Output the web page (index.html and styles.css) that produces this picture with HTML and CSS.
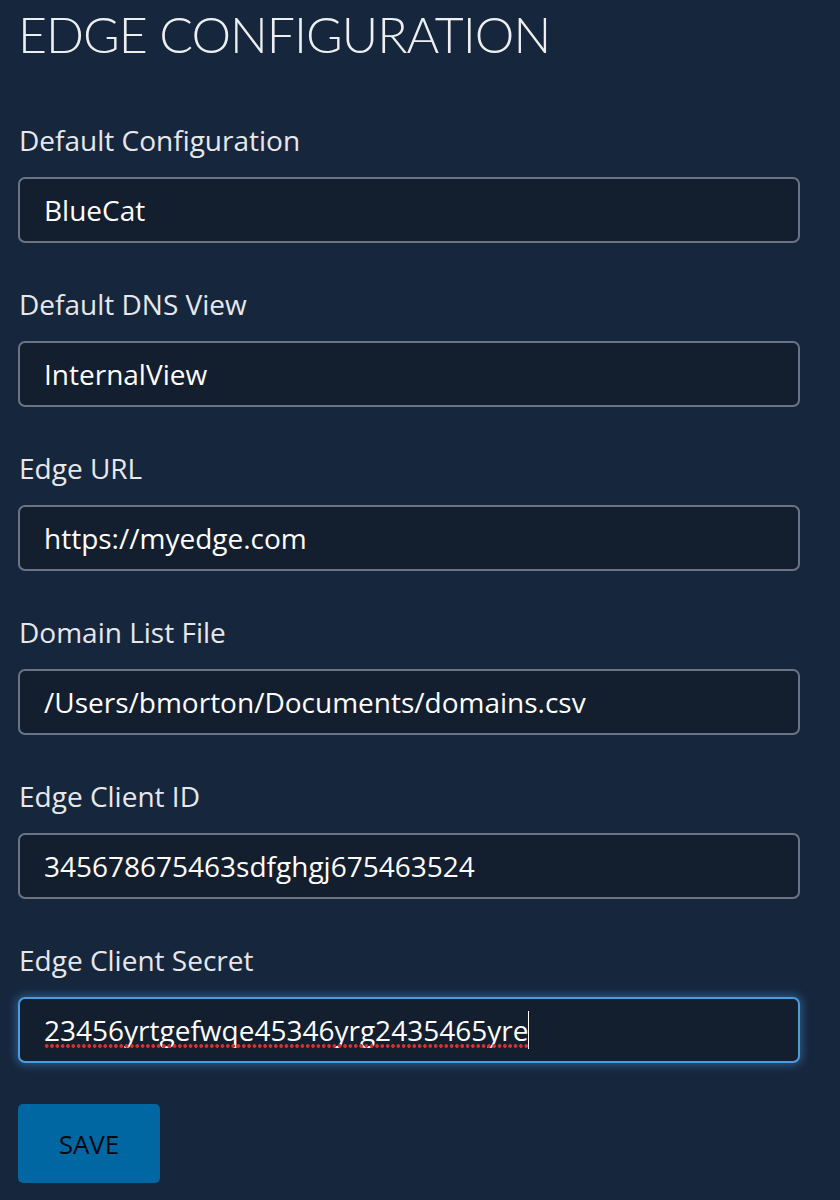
FILE: index.html
```html
<!DOCTYPE html>
<html>
<head>
<meta charset="utf-8">
<link rel="stylesheet" href="styles.css">
</head>
<body>
<main class="page">
  <h1 class="title">EDGE CONFIGURATION</h1>
  <form class="form">
    <div class="field">
      <label class="label">Default Configuration</label>
      <div class="input">BlueCat</div>
    </div>
    <div class="field">
      <label class="label">Default DNS View</label>
      <div class="input">InternalView</div>
    </div>
    <div class="field">
      <label class="label">Edge URL</label>
      <div class="input">https://myedge.com</div>
    </div>
    <div class="field">
      <label class="label">Domain List File</label>
      <div class="input">/Users/bmorton/Documents/domains.csv</div>
    </div>
    <div class="field">
      <label class="label">Edge Client ID</label>
      <div class="input">345678675463sdfghgj675463524</div>
    </div>
    <div class="field last">
      <label class="label">Edge Client Secret</label>
      <div class="input focused"><span class="misspelled">23456yrtgefwqe45346yrg2435465yre</span><span class="caret"></span></div>
    </div>
    <button type="button" class="save">SAVE</button>
  </form>
</main>
</body>
</html>
```
FILE: styles.css
```css
html, body {
  margin: 0;
  padding: 0;
  background: #16263d;
}
.page {
  padding: 0 40px 0 18px;
  height: 1200px;
  box-sizing: border-box;
}
.title {
  margin: 0;
  padding-top: 4px;
  font-family: Lato, "Liberation Sans", sans-serif;
  font-weight: 300;
  font-size: 50px;
  line-height: 60px;
  color: #eeeff1;
  letter-spacing: -1px;
}
.form {
  display: flex;
  flex-direction: column;
  margin-top: 61px;
}
.field {
  display: flex;
  flex-direction: column;
  gap: 22px;
  margin-bottom: 46px;
}
.field.last {
  margin-bottom: 41px;
}
.label {
  font-family: "Open Sans", "Noto Sans", sans-serif;
  font-size: 28px;
  line-height: 30px;
  color: #e6e8ec;
  padding-left: 1px;
}
.input {
  display: flex;
  align-items: center;
  height: 66px;
  box-sizing: border-box;
  border: 2px solid #6b7385;
  border-radius: 7px;
  background: #131e2f;
  padding-left: 24px;
  font-family: "Open Sans", "Noto Sans", sans-serif;
  font-size: 28px;
  color: #ffffff;
}
.input.focused {
  border-color: #4a9ee0;
  box-shadow: 0 0 10px 2px rgba(74, 158, 224, 0.45);
}
.misspelled {
  position: relative;
}
.misspelled::after {
  content: "";
  position: absolute;
  left: 0;
  right: 0;
  top: 33px;
  height: 4px;
  background-image: radial-gradient(circle at center, #dc2f2c 1.6px, transparent 2.1px);
  background-size: 5.33px 4px;
  background-repeat: repeat-x;
}
.caret {
  display: inline-block;
  width: 1px;
  height: 38px;
  background: #ffffff;
}
.save {
  align-self: flex-start;
  width: 142px;
  height: 79px;
  border: none;
  border-radius: 5px;
  background: #0067a3;
  color: #02080f;
  font-family: "Open Sans", "Noto Sans", sans-serif;
  font-size: 26px;
}
```
